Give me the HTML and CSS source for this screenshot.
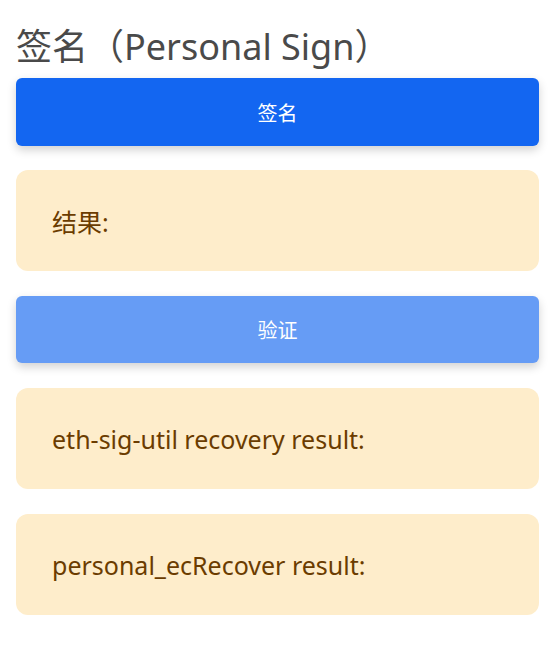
FILE: index.html
```html
<!DOCTYPE html>
<html lang="zh">
<head>
<meta charset="utf-8">
<link rel="stylesheet" href="styles.css">
</head>
<body>
<main class="page">
  <h1 class="title">签名（Personal Sign）</h1>
  <button class="btn btn-primary">签名</button>
  <div class="result">结果:</div>
  <button class="btn btn-muted">验证</button>
  <div class="result">eth-sig-util recovery result:</div>
  <div class="result">personal_ecRecover result:</div>
</main>
</body>
</html>
```

FILE: styles.css
```css
html, body {
  margin: 0;
  padding: 0;
  background: #ffffff;
}
.page {
  display: flex;
  flex-direction: column;
  gap: 25px;
  padding: 22px 21px 0 16px;
  font-family: "Noto Sans", "Noto Sans CJK SC", sans-serif;
}
.title {
  margin: 0 0 -19px 0;
  font-size: 36px;
  font-weight: 400;
  line-height: 50px;
  color: #4a4a4a;
}
.btn {
  display: block;
  width: 100%;
  height: 68px;
  border: none;
  border-radius: 6px;
  color: #ffffff;
  font-family: "Noto Sans", "Noto Sans CJK SC", sans-serif;
  font-size: 20px;
  box-shadow: 0 4px 10px rgba(0, 0, 0, 0.18);
}
.btn-primary {
  background: #1366f1;
  margin-bottom: -1px;
}
.btn-muted {
  background: #669cf5;
  height: 67px;
}
.result {
  box-sizing: border-box;
  height: 101px;
  padding: 0 36px;
  display: flex;
  align-items: center;
  background: #feedcb;
  border-radius: 12px;
  color: #6b3c00;
  font-size: 25px;
}
```
